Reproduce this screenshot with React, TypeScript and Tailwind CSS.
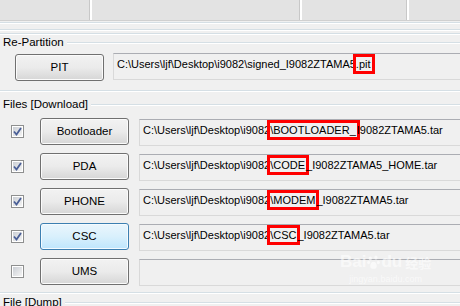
import React from "react";

const font = { fontFamily: '"Liberation Sans", Arial, sans-serif' };

const Etched = ({ className = "" }: { className?: string }) => (
  <div className={`h-[2px] border-t border-[#d5dfe5] border-b border-b-white ${className}`} />
);

const GroupLabel = ({ label }: { label: string }) => (
  <div className="flex items-center h-[14px]">
    <span className="pl-[3px] pr-[3px] text-[11.5px] leading-[14px] text-black">{label}</span>
    <Etched className="flex-1 mt-[1px]" />
  </div>
);

const Button = ({ label, active }: { label: string; active?: boolean }) => (
  <div
    className={
      active
        ? "w-[89px] h-[27px] shrink-0 rounded-[3px] border border-[#3c7fb1] bg-gradient-to-b from-[#eaf6fd] via-[#d9f0fc] to-[#bee6fd] flex items-center justify-center text-[11.5px] text-black shadow-[inset_0_0_0_1px_#f4fbff]"
        : "w-[89px] h-[27px] shrink-0 rounded-[3px] border border-[#707070] bg-gradient-to-b from-[#f2f2f2] via-[#ebebeb] to-[#d6d6d6] flex items-center justify-center text-[11.5px] text-black shadow-[inset_0_0_0_1px_#fbfbfb]"
    }
  >
    {label}
  </div>
);

const Check = ({ on }: { on: boolean }) => (
  <div className="w-[13px] h-[13px] shrink-0 border border-[#8e8f8f] bg-white p-[1px]">
    <div className="w-full h-full bg-gradient-to-br from-[#cbcfd5] to-[#f4f4f4] flex items-center justify-center">
      {on && (
        <svg width="9" height="9" viewBox="0 0 9 9">
          <path d="M1 4.5 L3.5 7.5 L8 1" fill="none" stroke="#4a5f97" strokeWidth="1.8" />
        </svg>
      )}
    </div>
  </div>
);

const Mark = ({ children }: { children: React.ReactNode }) => (
  <span className="inline-block outline-[3px] outline-solid outline-[#ff0000] leading-[14px] pr-[1px]">{children}</span>
);

const PathBox = ({ children, className = "" }: { children?: React.ReactNode; className?: string }) => (
  <div
    className={`h-[27px] flex-1 border border-[#d9d9d9] border-t-[#abadb3] bg-[#f0f0f0] pl-[3px] pt-[3px] text-[11px] leading-[14px] text-black whitespace-nowrap overflow-hidden ${className}`}
  >
    {children}
  </div>
);

const base = "C:\\Users\\ljf\\Desktop\\i9082";

const rows: { label: string; on: boolean; active?: boolean; path?: React.ReactNode }[] = [
  {
    label: "Bootloader",
    on: true,
    path: (
      <>
        {base}
        <Mark>\BOOTLOADER_</Mark>I9082ZTAMA5.tar
      </>
    ),
  },
  {
    label: "PDA",
    on: true,
    path: (
      <>
        {base}
        <Mark>\CODE</Mark>_I9082ZTAMA5_HOME.tar
      </>
    ),
  },
  {
    label: "PHONE",
    on: true,
    path: (
      <>
        {base}
        <Mark>\MODEM</Mark>_I9082ZTAMA5.tar
      </>
    ),
  },
  {
    label: "CSC",
    on: true,
    active: true,
    path: (
      <>
        {base}
        <Mark>\CSC</Mark>_I9082ZTAMA5.tar
      </>
    ),
  },
  { label: "UMS", on: false },
];

export default function App() {
  return (
    <div className="relative w-[460px] h-[306px] overflow-hidden bg-[#f0f0f0] text-black" style={font}>
      {/* tab strip */}
      <div className="flex h-[21px] bg-[#e3e3e3] border-b border-[#d0d0d0]">
        <div className="w-[90px] border-r border-[#c8c8c8]" />
        <div className="w-[2px] bg-white" />
        <div className="w-[208px] border-r border-[#c8c8c8]" />
        <div className="w-[2px] bg-white" />
        <div className="w-[105px] border-r border-[#c8c8c8]" />
        <div className="w-[2px] bg-white" />
        <div className="flex-1" />
      </div>
      <Etched className="mt-[1px]" />
      <Etched className="mt-[5px]" />
      <Etched className="mt-[2px]" />

      <GroupLabel label="Re-Partition" />
      <div className="flex items-start mt-[4px] pl-[15px] gap-[9px]">
        <div className="mt-[1px]">
          <Button label="PIT" />
        </div>
        <PathBox className="-mr-[4px]">
          C:\Users\ljf\Desktop\i9082\signed_I9082ZTAMA5<Mark>.pit</Mark>
        </PathBox>
      </div>

      <Etched className="mt-[9px]" />
      <div className="mt-[5px]">
        <GroupLabel label="Files [Download]" />
      </div>

      <div className="flex flex-col gap-[8px] mt-[7px]">
        {rows.map((r) => (
          <div key={r.label} className="flex items-start h-[27px]">
            <div className="w-[40px] h-[27px] pl-[11px] flex items-center">
              <Check on={r.on} />
            </div>
            <Button label={r.label} active={r.active} />
            <div className="w-[10px]" />
            <PathBox className="-mr-[4px] mt-[1px]">{r.path}</PathBox>
          </div>
        ))}
      </div>

      <Etched className="mt-[7px]" />
      <div className="mt-[1px]">
        <GroupLabel label="File [Dump]" />
      </div>

      {/* baidu watermark */}
      <div className="absolute left-[340px] top-[252px] flex flex-col items-center text-white/60 pointer-events-none">
        <div className="flex items-end gap-[1px] text-[17px] font-bold leading-[20px]">
          <span>Bai</span>
          <svg width="13" height="15" viewBox="0 0 16 18" className="mb-[2px]">
            <ellipse cx="4" cy="4" rx="2" ry="2.5" fill="white" opacity="0.6" />
            <ellipse cx="11" cy="3" rx="2" ry="2.5" fill="white" opacity="0.6" />
            <ellipse cx="2" cy="9" rx="1.8" ry="2.2" fill="white" opacity="0.6" />
            <ellipse cx="14" cy="9" rx="1.8" ry="2.2" fill="white" opacity="0.6" />
            <path d="M8 8 C4 8 3 14 5 16 C6 17 10 17 11 16 C13 14 12 8 8 8 Z" fill="white" opacity="0.6" />
          </svg>
          <span>du</span>
          <span className="text-[13px] leading-[18px] ml-[2px]" style={{ fontFamily: '"Noto Sans CJK SC", sans-serif' }}>
            经验
          </span>
        </div>
        <div className="text-[9px] leading-[10px] mt-[2px] text-white/60">jingyan.baidu.com</div>
      </div>
    </div>
  );
}
